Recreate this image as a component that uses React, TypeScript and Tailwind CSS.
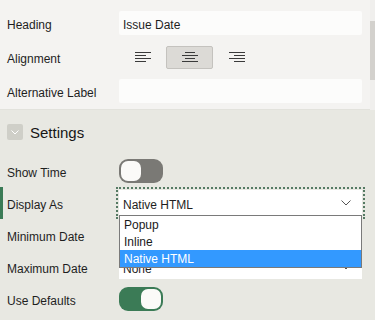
import React from 'react';

const FONT = { fontFamily: '"Liberation Sans", Arial, sans-serif' };

function AlignIcon({ kind }: { kind: 'left' | 'center' | 'right' }) {
  const rows =
    kind === 'left'
      ? [
          [0, 16],
          [0, 11],
          [0, 16],
          [0, 11],
        ]
      : kind === 'center'
        ? [
            [3, 13],
            [0, 16],
            [3, 13],
            [0, 16],
          ]
        : [
            [0, 16],
            [5, 16],
            [0, 16],
            [5, 16],
          ];
  return (
    <svg width="16" height="11" viewBox="0 0 16 11" className="block">
      {rows.map(([a, b], i) => (
        <line key={i} x1={a} x2={b} y1={i * 3 + 0.5} y2={i * 3 + 0.5} stroke="#3a3a3a" strokeWidth="1" />
      ))}
    </svg>
  );
}

function Chevron() {
  return (
    <svg width="10" height="6" viewBox="0 0 10 6" className="block">
      <path d="M0.5 0.5 L5 5 L9.5 0.5" fill="none" stroke="#555" strokeWidth="1" />
    </svg>
  );
}

function Toggle({ on }: { on: boolean }) {
  return (
    <div
      className={
        on
          ? 'flex h-[24px] w-[44px] items-center justify-end rounded-[9px] bg-[#3b7b56] px-[2px]'
          : 'flex h-[24px] w-[44px] items-center justify-start rounded-[9px] bg-[#7a7975] px-[2px]'
      }
    >
      <div className="h-[20px] w-[20px] rounded-[7px] bg-[#fbfaf8]" />
    </div>
  );
}

function TopRow({ label, children }: { label: string; children: React.ReactNode }) {
  return (
    <div className="flex h-[24px] items-center">
      <div className="w-[119px] pl-[7px] pt-[3px] text-[12px] text-[#1e1e1e]">{label}</div>
      <div className="w-[243px]">{children}</div>
    </div>
  );
}

function SettingRow({
  label,
  active,
  children,
}: {
  label: string;
  active?: boolean;
  children?: React.ReactNode;
}) {
  return (
    <div className="relative flex h-[32px] items-center">
      {active && <div className="absolute left-0 top-0 h-[32px] w-[3px] bg-[#3b7b56]" />}
      <div className="w-[119px] pl-[7px] pt-[3px] text-[12px] text-[#1e1e1e]">{label}</div>
      <div className="relative w-[243px]">{children}</div>
    </div>
  );
}

function SelectBox({ value, focused }: { value: string; focused?: boolean }) {
  return (
    <div
      className={
        focused
          ? 'flex h-[26px] items-center justify-between bg-white pl-[4px] pr-[11px] text-[12px] text-[#1e1e1e] outline-2 outline-dotted outline-offset-[1px] outline-[#557a63]'
          : 'flex h-[24px] items-center justify-between bg-white pl-[4px] pr-[11px] text-[12px] text-[#1e1e1e]'
      }
    >
      <span className="pt-[3px]">{value}</span>
      <Chevron />
    </div>
  );
}

export default function App() {
  return (
    <div className="relative h-[320px] w-[375px] overflow-hidden bg-[#e8e8e2]" style={FONT}>
      {/* Upper property group */}
      <div className="flex h-[110px] flex-col gap-[10px] border-b border-[#e2e2dc] bg-[#f4f3f1] pt-[11px]">
        <TopRow label="Heading">
          <div className="flex h-[24px] items-center rounded-[2px] bg-[#fcfcfb] pl-[4px] pt-[3px] text-[12px] text-[#1e1e1e]">
            Issue Date
          </div>
        </TopRow>
        <TopRow label="Alignment">
          <div className="flex items-center pl-[16px]">
            <div className="flex h-[23px] w-[31px] items-center">
              <AlignIcon kind="left" />
            </div>
            <div className="flex h-[23px] w-[47px] items-center justify-center rounded-[2px] border border-[#c4c2be] bg-[#dcdad6]">
              <AlignIcon kind="center" />
            </div>
            <div className="flex h-[23px] w-[47px] items-center justify-center">
              <AlignIcon kind="right" />
            </div>
          </div>
        </TopRow>
        <TopRow label="Alternative Label">
          <div className="h-[24px] rounded-[2px] bg-[#fcfcfb]" />
        </TopRow>
      </div>

      {/* Settings group */}
      <div className="pt-[14px]">
        <div className="flex h-[16px] items-center gap-[7px] pl-[7px]">
          <div className="flex h-[16px] w-[16px] items-center justify-center rounded-[2px] bg-[#cfcfc8]">
            <svg width="8" height="5" viewBox="0 0 8 5" className="block">
              <path d="M0.5 0.5 L4 4 L7.5 0.5" fill="none" stroke="#ffffff" strokeWidth="1" />
            </svg>
          </div>
          <span className="pt-[3px] text-[15px] text-[#161616]">Settings</span>
        </div>

        <div className="mt-[15px] flex flex-col">
          <SettingRow label="Show Time">
            <Toggle on={false} />
          </SettingRow>
          <SettingRow label="Display As" active>
            <div className="z-10">
              <SelectBox value="Native HTML" focused />
            </div>
          </SettingRow>
          <SettingRow label="Minimum Date">
            <SelectBox value="None" />
          </SettingRow>
          <SettingRow label="Maximum Date">
            <SelectBox value="None" />
          </SettingRow>
          <SettingRow label="Use Defaults">
            <Toggle on />
          </SettingRow>
        </div>
      </div>

      {/* Open native listbox */}
      <div className="absolute left-[119px] top-[215px] z-20 w-[243px] border border-[#7a7a7a] bg-white text-[12px] text-[#1a1a1a]">
        <div className="flex h-[17px] items-center pl-[4px] pt-[1px]">Popup</div>
        <div className="flex h-[17px] items-center pl-[4px] pt-[1px]">Inline</div>
        <div className="flex h-[17px] items-center bg-[#3399ff] pl-[4px] pt-[1px] text-white">Native HTML</div>
      </div>

      {/* Scrollbar */}
      <div className="absolute right-0 top-0 h-[110px] w-[5px] bg-[#f0efed]">
        <div className="mt-[21px] h-[59px] w-[5px] bg-[#d3d1cd]" />
      </div>
    </div>
  );
}
